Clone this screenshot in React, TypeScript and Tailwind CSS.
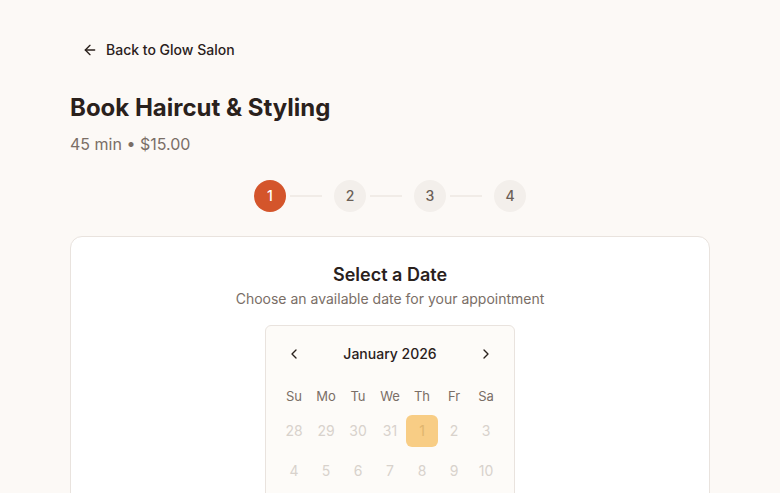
import { ArrowLeft, ChevronLeft, ChevronRight } from "lucide-react";

const DAYS = ["Su", "Mo", "Tu", "We", "Th", "Fr", "Sa"];
const WEEKS = [
    [28, 29, 30, 31, 1, 2, 3],
    [4, 5, 6, 7, 8, 9, 10],
];
const STEPS = [1, 2, 3, 4];

export default function App() {
    return (
        <div className="min-h-screen bg-[#fcf9f6] text-[#2a211c]" style={{ fontFamily: "Inter, 'Noto Sans', sans-serif" }}>
            <div className="max-w-2xl mx-auto px-4 pt-8">
                <button className="flex items-center gap-2 h-9 px-3 rounded-md text-sm font-medium text-[#2a211c]">
                    <ArrowLeft size={16} strokeWidth={2} />
                    Back to Glow Salon
                </button>

                <h1 className="mt-6 text-2xl font-bold leading-8">Book Haircut &amp; Styling</h1>
                <p className="mt-2 text-base text-[#7a6e66]">45 min • $15.00</p>

                {/* ── Steps ── */}
                <div className="mt-6 flex items-center justify-center">
                    {STEPS.map((s, i) => (
                        <div key={s} className="flex items-center">
                            <div
                                className={`w-8 h-8 rounded-full flex items-center justify-center text-sm font-medium ${
                                    s === 1 ? "bg-[#d4552b] text-white" : "bg-[#f3efeb] text-[#6b5f57]"
                                }`}
                            >
                                {s}
                            </div>
                            {i < STEPS.length - 1 && <div className="ml-1 mr-3 w-8 h-[2px] bg-[#f1ece7]" />}
                        </div>
                    ))}
                </div>

                {/* ── Card ── */}
                <div className="mt-6 bg-white border border-[#e9e3de] rounded-xl p-6 pb-10">
                    <h2 className="text-center text-lg font-semibold leading-7">Select a Date</h2>
                    <p className="text-center text-sm text-[#7a6e66]">Choose an available date for your appointment</p>

                    <div className="mt-4 mx-auto w-[250px] border border-[#e9e3de] rounded-md bg-[#fdfbf8] p-3">
                        <div className="flex items-center justify-between h-8">
                            <button className="w-8 h-8 flex items-center justify-center text-[#2a211c]">
                                <ChevronLeft size={16} />
                            </button>
                            <span className="text-sm font-medium">January 2026</span>
                            <button className="w-8 h-8 flex items-center justify-center text-[#2a211c]">
                                <ChevronRight size={16} />
                            </button>
                        </div>

                        <div className="mt-4 grid grid-cols-7">
                            {DAYS.map(d => (
                                <div key={d} className="w-8 h-[21px] flex items-center justify-center text-[13px] text-[#7a6e66]">
                                    {d}
                                </div>
                            ))}
                        </div>

                        {WEEKS.map((week, wi) => (
                            <div key={wi} className="mt-2 grid grid-cols-7">
                                {week.map((n, di) => (
                                    <div
                                        key={di}
                                        className={`w-8 h-8 flex items-center justify-center rounded-md text-sm ${
                                            wi === 0 && n === 1 ? "bg-[#f8cd85] text-[#e0b56e]" : "text-[#d8d2cc]"
                                        }`}
                                    >
                                        {n}
                                    </div>
                                ))}
                            </div>
                        ))}
                    </div>
                </div>
            </div>
        </div>
    );
}
